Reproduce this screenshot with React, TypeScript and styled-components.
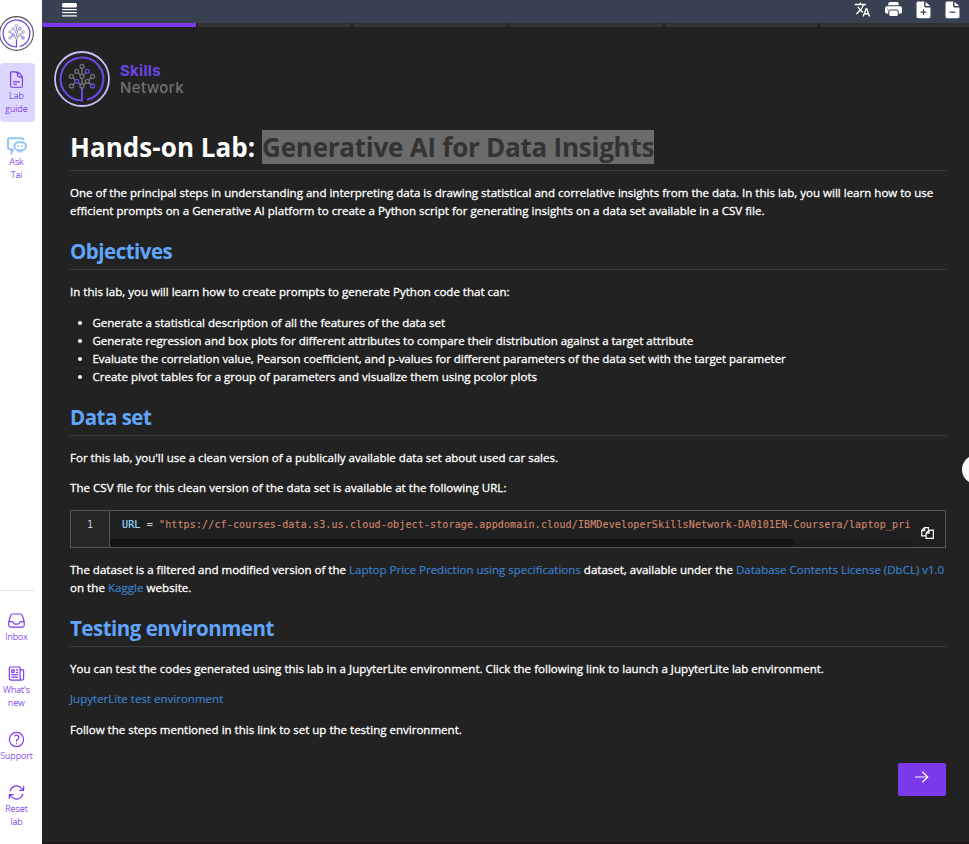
import React from "react";
import styled, { createGlobalStyle } from "styled-components";
import {
  HiOutlineArrowPath,
  HiOutlineDocumentText,
  HiOutlineInbox,
  HiOutlineNewspaper,
  HiOutlineQuestionMarkCircle,
} from "react-icons/hi2";
import { MdTranslate } from "react-icons/md";
import { BsPrinterFill } from "react-icons/bs";

const Global = createGlobalStyle`
  html, body, #root { height: 844px; }
  body {
    margin: 0;
    overflow: hidden;
    background: #222;
    font-family: "Open Sans", "Noto Sans", sans-serif;
  }
  svg { display: block; flex: none; }
`;

const Shell = styled.div`
  display: flex;
  width: 969px;
  height: 844px;
  overflow: hidden;
`;

const Sidebar = styled.nav`
  width: 42px;
  flex: none;
  background: #fff;
  display: flex;
  flex-direction: column;
`;

const Brand = styled.div`
  width: 34px;
  padding-top: 16px;
  margin-left: -1px;
`;

const SideItem = styled.a<{ $active?: boolean; $top: number; $height: number }>`
  width: ${(p) => (p.$active ? 35 : 33)}px;
  height: ${(p) => p.$height}px;
  margin-top: ${(p) => p.$top}px;
  padding-top: ${(p) => (p.$active ? 7 : 0)}px;
  padding-right: ${(p) => (p.$active ? 2 : 0)}px;
  box-sizing: border-box;
  border-radius: 4px;
  background: ${(p) => (p.$active ? "#ddd6fe" : "transparent")};
  color: #7c3aed;
  display: flex;
  flex-direction: column;
  align-items: center;
`;

const SideLabel = styled.span`
  font-size: 9px;
  font-weight: 300;
  line-height: 13px;
  text-align: center;
  white-space: pre;
  -webkit-text-stroke: 0.15px currentColor;
`;

const SideBottom = styled.div`
  margin-top: auto;
  width: 34px;
  height: 254px;
  border-top: 1px solid #e5e5e5;
  box-sizing: border-box;
`;

const Main = styled.main`
  position: relative;
  flex: 1;
  min-width: 0;
  display: flex;
  flex-direction: column;
  background: #222;
  border-bottom: 2px solid #1a1517;
  box-sizing: border-box;
`;

const TopBar = styled.header`
  height: 23px;
  flex: none;
  background: #374151;
  color: #fff;
  display: flex;
  justify-content: space-between;
  padding: 0 9px 0 20px;
`;

const MenuButton = styled.div`
  padding-top: 3px;
`;

const Tools = styled.div`
  display: flex;
  gap: 14px;
  padding-top: 1px;
`;

const Progress = styled.div`
  display: flex;
  gap: 2px;
  height: 4px;
  flex: none;
  overflow: hidden;
  background: #222;
`;

const Step = styled.div<{ $done?: boolean }>`
  flex: 0 0 153.7px;
  background: ${(p) => (p.$done ? "#7c3aed" : "#333")};
`;

const LogoRow = styled.div`
  display: flex;
  align-items: center;
  gap: 10px;
  height: 56px;
  margin: 24px 0 0 12px;
`;

const LogoText = styled.div`
  display: flex;
  flex-direction: column;
  font-family: Inter, sans-serif;
  font-size: 15px;
  line-height: 17px;
  color: #6f7277;
`;

const LogoStrong = styled.strong`
  height: 17px;
  font-weight: 700;
  color: #6b46e5;
  letter-spacing: 0.3px;
`;

const LogoLight = styled.span`
  height: 17px;
  font-weight: 500;
  letter-spacing: 0.4px;
`;

const Article = styled.article`
  padding: 0 23px 0 28px;
  color: #fff;
  font-size: 11.54px;
  line-height: 18px;
  display: flex;
  flex-direction: column;
`;

const Title = styled.h1`
  margin: 23px 0 0;
  height: 41px;
  box-sizing: border-box;
  border-bottom: 1px solid #3b3b3b;
  font-size: 26px;
  line-height: 34px;
  font-weight: 700;
  display: flex;
  align-items: flex-start;
  white-space: pre;
  letter-spacing: 0.05px;
`;

const Selected = styled.span`
  height: 34px;
  background: #6b6b6b;
  color: #333;
  letter-spacing: -0.24px;
`;

const Heading = styled.h2`
  margin: 18px 0 0;
  height: 32px;
  box-sizing: border-box;
  border-bottom: 1px solid #3b3b3b;
  color: #60a5fa;
  font-size: 20.5px;
  line-height: 26px;
  font-weight: 700;
  letter-spacing: -0.5px;
`;

const Para = styled.p<{ $top: number }>`
  margin: ${(p) => p.$top}px 0 0;
`;

const Line = styled.span<{ $track?: number }>`
  display: block;
  white-space: pre;
  letter-spacing: ${(p) => p.$track ?? 0}px;
  -webkit-text-stroke: 0.3px currentColor;
`;

const Link = styled.a`
  color: #3b82d0;
  -webkit-text-stroke-width: 0.15px;
`;

const Bullets = styled.ul`
  margin: 13px 0 0;
  padding: 0 0 0 22.5px;
`;

const CodeBox = styled.div`
  height: 38px;
  margin-top: 13px;
  box-sizing: border-box;
  border: 1px solid #575757;
  background: #1e1f21;
  display: flex;
  font-family: "DejaVu Sans Mono", monospace;
  font-size: 10px;
  line-height: 14px;
`;

const Gutter = styled.div`
  width: 38px;
  flex: none;
  padding-top: 7px;
  text-align: center;
  color: #ccc;
  background: #262626;
  border-right: 1px solid #575757;
`;

const CodeScroll = styled.div`
  flex: 1;
  min-width: 0;
  display: flex;
  flex-direction: column;
  justify-content: space-between;
`;

const Code = styled.code`
  padding: 7px 0 0 12px;
  font: inherit;
  white-space: pre;
  color: #d4d4d4;
  letter-spacing: 0.14px;
  -webkit-text-stroke: 0.15px currentColor;
`;

const Name = styled.span`
  color: #9cdcfe;
`;

const Str = styled.span`
  color: #ce8468;
`;

const Track = styled.div`
  height: 8px;
  background: #1b1c1d;
`;

const Thumb = styled.div`
  width: 684px;
  height: 8px;
  border-radius: 4px;
  background: #131415;
`;

const CopySlot = styled.div`
  width: 35px;
  flex: none;
  display: flex;
  padding: 16px 0 0 11px;
  box-sizing: border-box;
`;

const NextButton = styled.button`
  align-self: flex-end;
  width: 48px;
  height: 33px;
  margin-top: 24px;
  padding: 0 0 5px;
  border: 0;
  border-radius: 2px;
  background: #7c3aed;
  color: #fff;
  display: flex;
  align-items: center;
  justify-content: center;
`;

const Handle = styled.div`
  position: absolute;
  top: 455px;
  right: -22px;
  width: 29px;
  height: 29px;
  border-radius: 50%;
  background: #f9fafb;
`;

function TreeLogo({ size, ring, node }: { size: number; ring: string; node: string }) {
  const v = "#6d4ae8";
  const nodes: [number, number, string][] = [
    [28, 15.5, node],
    [22.7, 20.3, node],
    [33.3, 20.3, v],
    [17.5, 25.4, node],
    [28, 25.4, node],
    [38.5, 25.4, node],
    [22.7, 30.3, v],
    [33.3, 30.3, node],
    [17.5, 35, node],
    [28, 35, node],
    [38.5, 35, v],
  ];
  return (
    <svg width={size} height={size} viewBox="0 0 56 56" fill="none">
      <circle cx="28" cy="28" r="27" stroke={ring} strokeWidth="1.8" />
      <path d="M28 37V49.4A21.4 21.4 0 1 1 33 48.8" stroke={v} strokeWidth="2" />
      <path
        d="M28 17.5V23.4M28 27.4V33M24.2 21.8L26.6 24M31.8 21.8L29.4 24M19 26.8L21.2 28.9M37 26.8L34.8 28.9M21.2 31.7L19 33.6M34.8 31.7L37 33.6M24.2 31.7L26.5 33.6M31.8 31.7L29.5 33.6"
        stroke={node}
        strokeWidth="1.4"
      />
      {nodes.map(([x, y, c]) => (
        <circle key={`${x}-${y}`} cx={x} cy={y} r="2" stroke={c} strokeWidth="1.3" />
      ))}
    </svg>
  );
}

function TaiIcon() {
  return (
    <svg width="20" height="18" viewBox="0 0 19 17" fill="none" stroke="#93c5fd" strokeWidth="1.9">
      <path d="M6 11.5L4.3 14.5V11.5H2.3C1.4 11.5 1 11 1 10.2V2.7C1 1.6 1.5 1.2 2.4 1.2H14C15.2 1.2 15.8 1.8 15.8 3" />
      <rect x="7" y="5" width="11" height="7.6" rx="3.8" />
      <path d="M10.8 7.6V9.4M14.2 7.6V9.4" strokeWidth="1.3" />
      <path d="M10 14H15" strokeWidth="1" />
    </svg>
  );
}

function MenuIcon() {
  return (
    <svg width="15" height="14" viewBox="0 0 15 14" fill="#fff">
      <rect x="0" y="0" width="15" height="4.4" rx="1.6" />
      <rect x="0" y="6" width="15" height="1.2" rx=".6" />
      <rect x="0" y="9.1" width="15" height="1.2" rx=".6" />
      <rect x="0" y="12.3" width="15" height="1.2" rx=".6" />
    </svg>
  );
}

function FileIcon({ plus }: { plus?: boolean }) {
  return (
    <svg width="15" height="18" viewBox="0 0 14 18" preserveAspectRatio="none">
      <path
        d="M2 .5H7.6V5.1C7.6 6 8.1 6.4 8.9 6.4H13.5V15.6C13.5 16.6 12.9 17.2 12 17.2H2C1.1 17.2.5 16.6.5 15.6V2C.5 1.1 1.1.5 2 .5Z"
        fill="#fff"
      />
      <path d="M8.9.8L13.2 5.1H8.9Z" fill="#fff" />
      <path
        d={plus ? "M4.3 11.2H9.7M7 8.5V13.9" : "M4.3 11.2H9.7"}
        stroke="#374151"
        strokeWidth="1.2"
      />
    </svg>
  );
}

function CopyIcon() {
  return (
    <svg width="13" height="12" viewBox="0 0 13 12" fill="none" stroke="#fff" strokeWidth="1.2">
      <path d="M5 8.9H.7V3.6L3.5.7H7.4V2.8M3.6.8V3.7H.8" />
      <path d="M5.1 6.1L8 3.2H12.3V11.4H5.1ZM8.1 3.3V6.2H5.2" />
    </svg>
  );
}

function ArrowIcon() {
  return (
    <svg width="14" height="12" viewBox="0 0 14 12" fill="none" stroke="#fff" strokeWidth="1.3">
      <path d="M0 6H12.6" opacity=".75" />
      <path d="M7.4.8L12.7 6L7.4 11.2" />
    </svg>
  );
}

export default function App() {
  return (
    <>
      <Global />
      <Shell>
        <Sidebar>
          <Brand>
            <TreeLogo size={35} ring="#4b5563" node="#9489b8" />
          </Brand>
          <SideItem $active $top={12} $height={59}>
            <HiOutlineDocumentText size={19} />
            <SideLabel>{"Lab\nguide"}</SideLabel>
          </SideItem>
          <SideItem $top={15} $height={44}>
            <TaiIcon />
            <SideLabel>{"Ask\nTai"}</SideLabel>
          </SideItem>
          <SideBottom>
            <SideItem $top={20} $height={33}>
              <HiOutlineInbox size={19} />
              <SideLabel>Inbox</SideLabel>
            </SideItem>
            <SideItem $top={20} $height={46}>
              <HiOutlineNewspaper size={19} />
              <SideLabel>{"What's\nnew"}</SideLabel>
            </SideItem>
            <SideItem $top={20} $height={33}>
              <HiOutlineQuestionMarkCircle size={19} />
              <SideLabel>Support</SideLabel>
            </SideItem>
            <SideItem $top={20} $height={46}>
              <HiOutlineArrowPath size={19} />
              <SideLabel>{"Reset\nlab"}</SideLabel>
            </SideItem>
          </SideBottom>
        </Sidebar>

        <Main>
          <TopBar>
            <MenuButton>
              <MenuIcon />
            </MenuButton>
            <Tools>
              <MdTranslate size={17} />
              <BsPrinterFill size={17} />
              <FileIcon plus />
              <FileIcon />
            </Tools>
          </TopBar>
          <Progress>
            <Step $done />
            <Step />
            <Step />
            <Step />
            <Step />
            <Step />
          </Progress>

          <LogoRow>
            <TreeLogo size={56} ring="#c9bdf7" node="#6f7277" />
            <LogoText>
              <LogoStrong>Skills</LogoStrong>
              <LogoLight>Network</LogoLight>
            </LogoText>
          </LogoRow>

          <Article>
            <Title>
              {"Hands-on Lab: "}
              <Selected>Generative AI for Data Insights</Selected>
            </Title>
            <Para $top={13}>
              <Line>
                One of the principal steps in understanding and interpreting data is drawing
                statistical and correlative insights from the data. In this lab, you will learn how
                to use
              </Line>
              <Line $track={0.02}>
                efficient prompts on a Generative AI platform to create a Python script for
                generating insights on a data set available in a CSV file.
              </Line>
            </Para>

            <Heading>Objectives</Heading>
            <Para $top={13}>
              <Line>In this lab, you will learn how to create prompts to generate Python code that can:</Line>
            </Para>
            <Bullets>
              <li>
                <Line $track={-0.02}>Generate a statistical description of all the features of the data set</Line>
              </li>
              <li>
                <Line $track={-0.028}>
                  Generate regression and box plots for different attributes to compare their
                  distribution against a target attribute
                </Line>
              </li>
              <li>
                <Line $track={-0.04}>
                  Evaluate the correlation value, Pearson coefficient, and p-values for different
                  parameters of the data set with the target parameter
                </Line>
              </li>
              <li>
                <Line>
                  Create pivot tables for a group of parameters and visualize them using pcolor plots
                </Line>
              </li>
            </Bullets>

            <Heading>Data set</Heading>
            <Para $top={13}>
              <Line>For this lab, you'll use a clean version of a publically available data set about used car sales.</Line>
            </Para>
            <Para $top={12}>
              <Line $track={0.04}>The CSV file for this clean version of the data set is available at the following URL:</Line>
            </Para>
            <CodeBox>
              <Gutter>1</Gutter>
              <CodeScroll>
                <Code>
                  <Name>URL</Name>
                  {" = "}
                  <Str>
                    "https://cf-courses-data.s3.us.cloud-object-storage.appdomain.cloud/IBMDeveloperSkillsNetwork-DA0101EN-Coursera/laptop_pri
                  </Str>
                </Code>
                <Track>
                  <Thumb />
                </Track>
              </CodeScroll>
              <CopySlot>
                <CopyIcon />
              </CopySlot>
            </CodeBox>
            <Para $top={13}>
              <Line $track={-0.01}>
                {"The dataset is a filtered and modified version of the "}
                <Link>Laptop Price Prediction using specifications</Link>
                {" dataset, available under the "}
                <Link>Database Contents License (DbCL) v1.0</Link>
              </Line>
              <Line $track={0.04}>
                {"on the "}
                <Link>Kaggle</Link>
                {" website."}
              </Line>
            </Para>

            <Heading>Testing environment</Heading>
            <Para $top={13}>
              <Line $track={0.02}>
                You can test the codes generated using this lab in a JupyterLite environment. Click
                the following link to launch a JupyterLite lab environment.
              </Line>
            </Para>
            <Para $top={12}>
              <Line>
                <Link>JupyterLite test environment</Link>
              </Line>
            </Para>
            <Para $top={13}>
              <Line>Follow the steps mentioned in this link to set up the testing environment.</Line>
            </Para>
            <NextButton>
              <ArrowIcon />
            </NextButton>
          </Article>
          <Handle />
        </Main>
      </Shell>
    </>
  );
}
